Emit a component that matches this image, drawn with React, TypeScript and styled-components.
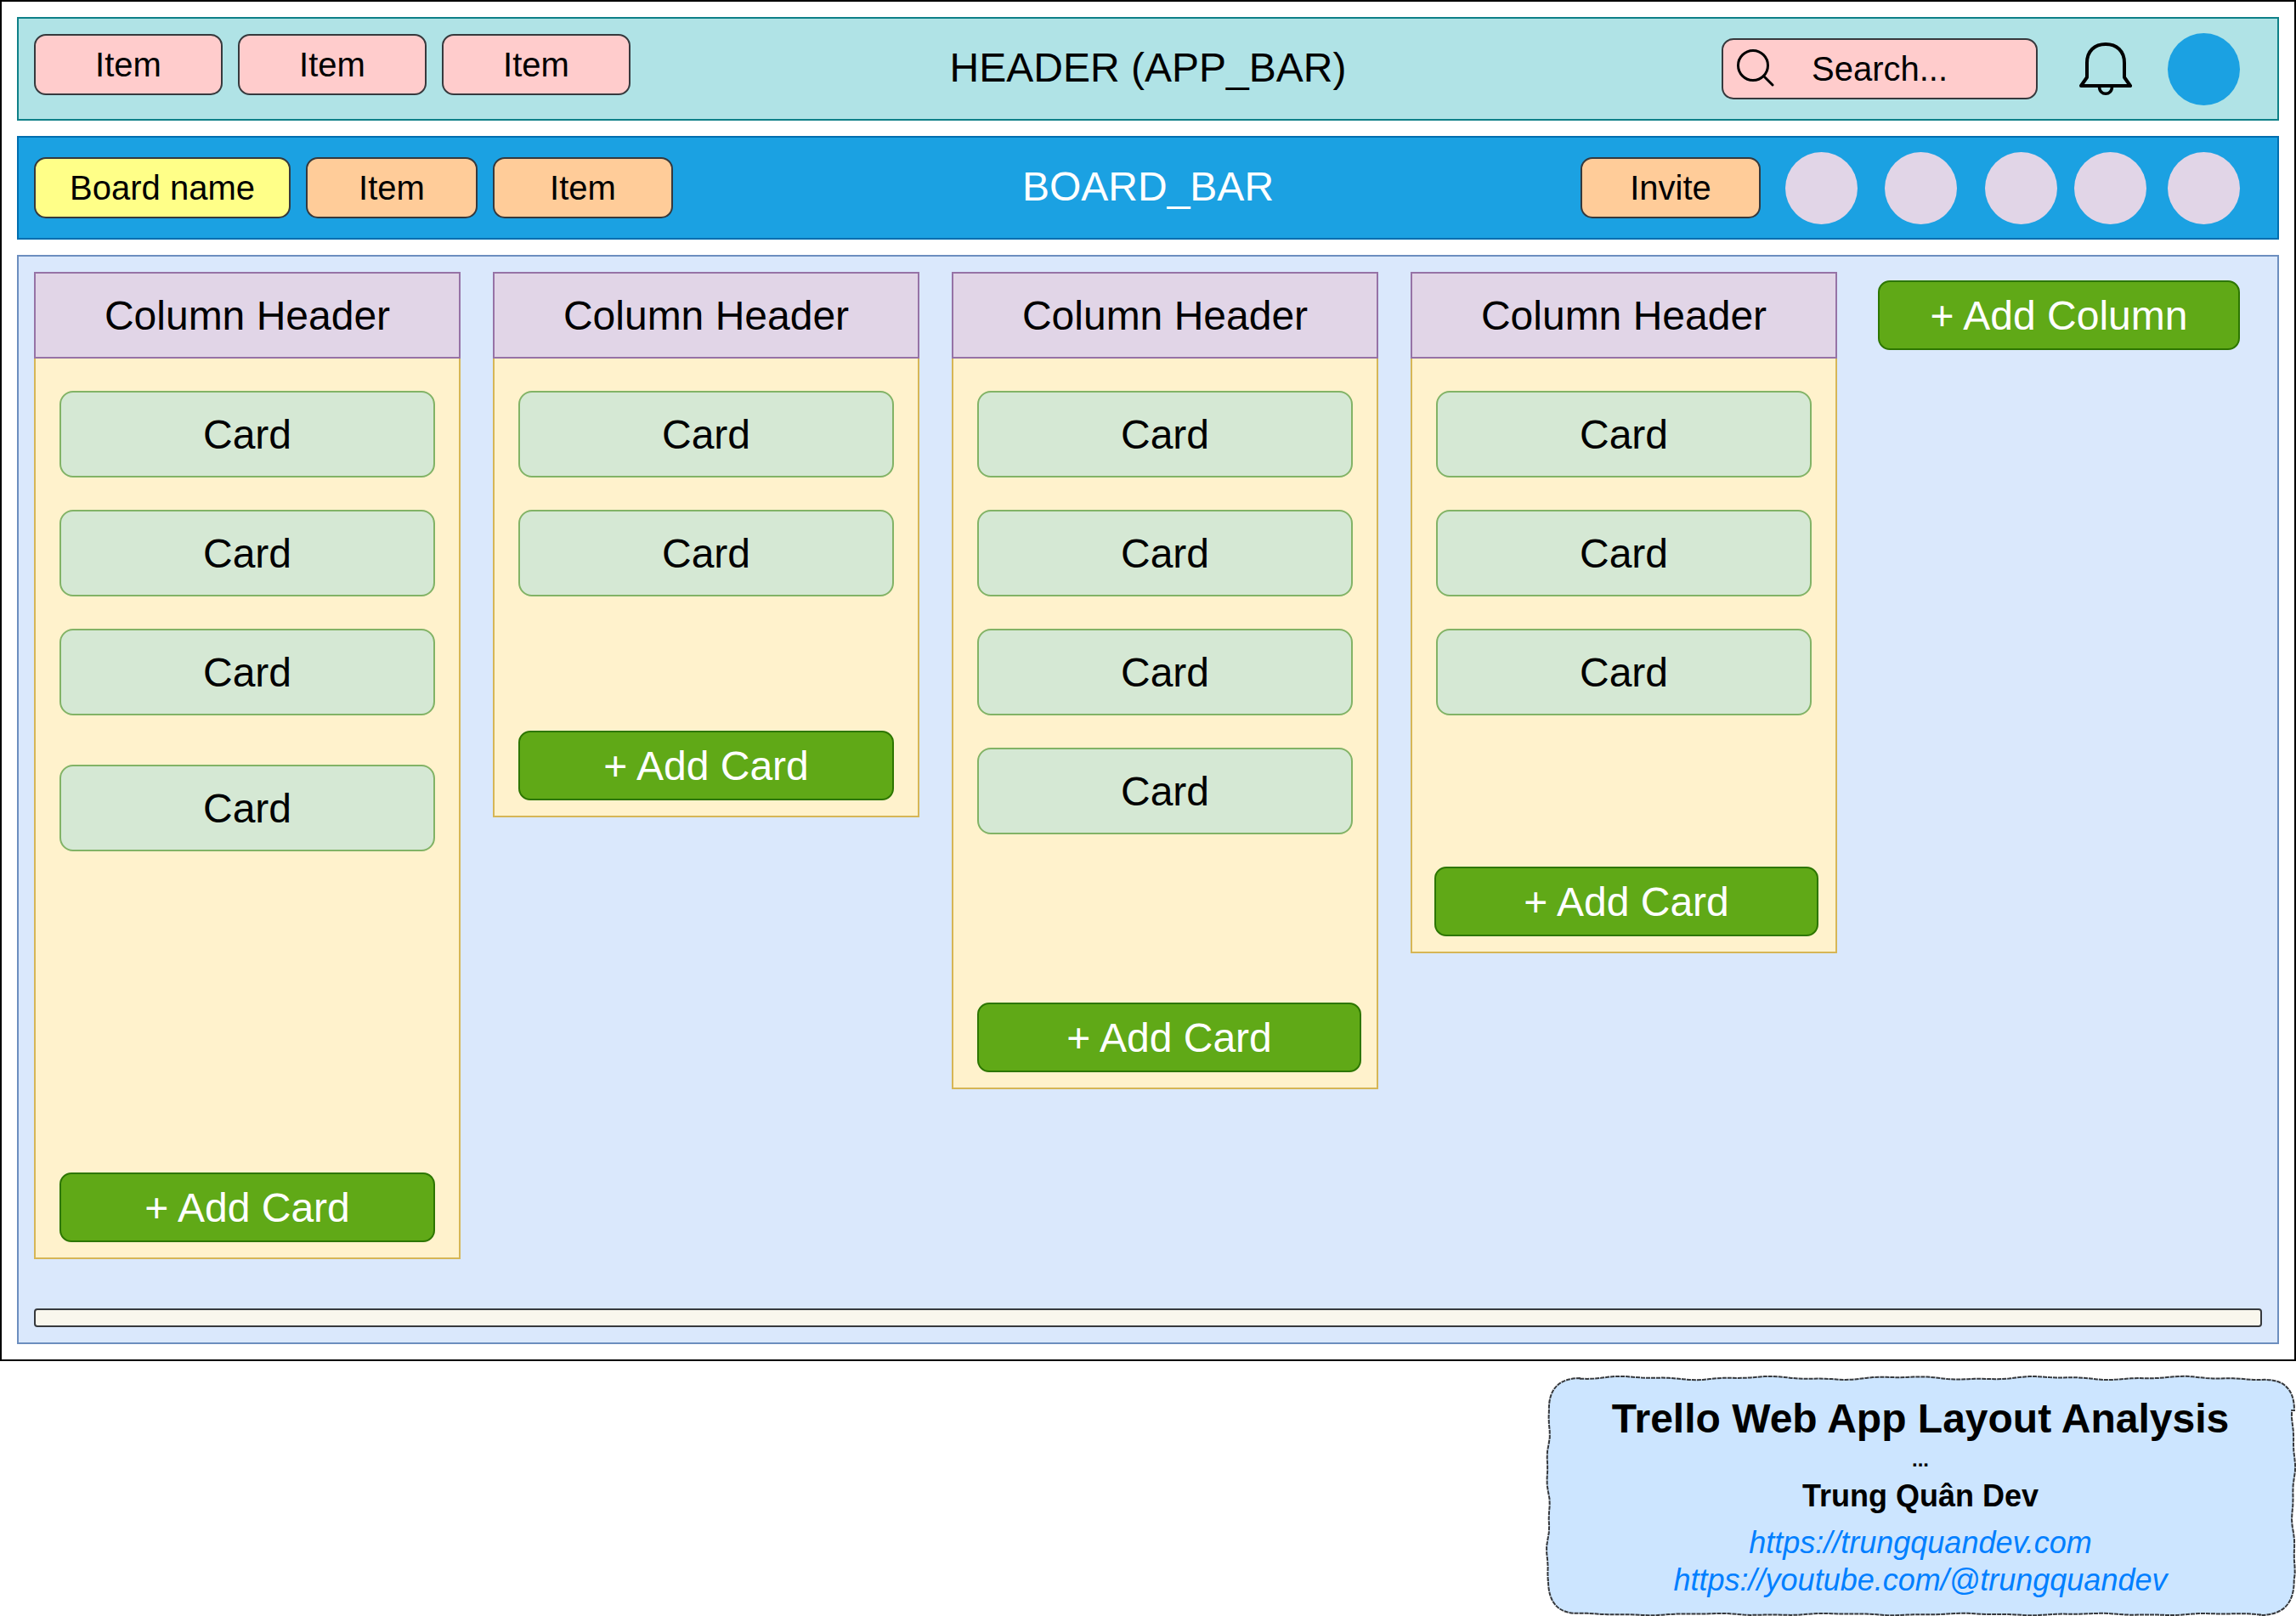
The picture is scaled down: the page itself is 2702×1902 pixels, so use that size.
import React from 'react'
import styled, { createGlobalStyle } from 'styled-components'

const GlobalStyle = createGlobalStyle`
  html, body {
    margin: 0;
    padding: 0;
    background: #ffffff;
  }
  * {
    box-sizing: border-box;
  }
  body {
    font-family: "Liberation Sans", Arial, sans-serif;
    color: #000000;
  }
`

const Page = styled.div`
  width: 2702px;
  height: 1902px;
  display: flex;
  flex-direction: column;
`

const Frame = styled.div`
  height: 1602px;
  border: 2px solid #000000;
  padding: 18px;
  display: flex;
  flex-direction: column;
  gap: 18px;
`

const Bar = styled.div<{ $fill: string; $line: string }>`
  height: 122px;
  flex: none;
  padding: 0 18px;
  display: grid;
  grid-template-columns: 1fr auto 1fr;
  align-items: center;
  background: ${(p) => p.$fill};
  border: 2px solid ${(p) => p.$line};
`

const Group = styled.div<{ $lift?: number }>`
  display: flex;
  align-items: center;
  gap: 18px;
  margin-bottom: ${(p) => p.$lift ?? 0}px;
`

const RightGroup = styled.div`
  display: flex;
  align-items: center;
  justify-content: flex-end;
  margin-right: 26px;
`

const BarTitle = styled.div<{ $light?: boolean }>`
  font-size: 48px;
  line-height: 56px;
  margin-bottom: 2px;
  color: ${(p) => (p.$light ? '#ffffff' : '#000000')};
`

const Chip = styled.div<{ $fill: string; $width: number }>`
  width: ${(p) => p.$width}px;
  height: 72px;
  flex: none;
  display: flex;
  align-items: center;
  justify-content: center;
  font-size: 40px;
  background: ${(p) => p.$fill};
  border: 2px solid #36393d;
  border-radius: 14px;
`

const SearchBox = styled.div`
  width: 372px;
  height: 72px;
  padding-left: 16px;
  display: flex;
  align-items: center;
  font-size: 40px;
  background: #ffcccc;
  border: 2px solid #36393d;
  border-radius: 14px;
`

const SearchGlyph = styled.svg`
  display: block;
  margin-bottom: 3px;
`

const SearchText = styled.span`
  margin: 1px 0 0 44px;
`

const BellWrap = styled.div`
  width: 62px;
  height: 62px;
  margin: 0 42px 0 49px;
  display: flex;
`

const Avatar = styled.div<{ $fill: string; $left?: number }>`
  width: 85px;
  height: 85px;
  flex: none;
  border-radius: 50%;
  margin-left: ${(p) => p.$left ?? 0}px;
  background: ${(p) => p.$fill};
`

const Main = styled.div`
  flex: 1;
  padding: 18px;
  display: flex;
  flex-direction: column;
  justify-content: space-between;
  background: #dae8fc;
  border: 2px solid #6c8ebf;
`

const Columns = styled.div`
  display: flex;
  align-items: flex-start;
  gap: 38px;
`

const Column = styled.div`
  width: 502px;
  flex: none;
`

const ColumnHeader = styled.div`
  height: 102px;
  display: flex;
  align-items: center;
  justify-content: center;
  font-size: 48px;
  background: #e1d5e7;
  border: 2px solid #9673a6;
`

const ColumnBody = styled.div<{ $height: number }>`
  height: ${(p) => p.$height}px;
  padding: 38px 18px 18px 28px;
  display: flex;
  flex-direction: column;
  background: #fff2cc;
  border: 2px solid #d6b656;
  border-top: none;
`

const Card = styled.div<{ $gap?: number }>`
  width: 442px;
  height: 102px;
  flex: none;
  margin-top: ${(p) => p.$gap ?? 0}px;
  display: flex;
  align-items: center;
  justify-content: center;
  font-size: 48px;
  background: #d5e8d4;
  border: 2px solid #82b366;
  border-radius: 16px;
`

const GreenButton = styled.div<{ $width: number }>`
  width: ${(p) => p.$width}px;
  height: 82px;
  flex: none;
  display: flex;
  align-items: center;
  justify-content: center;
  font-size: 48px;
  color: #ffffff;
  background: #60a917;
  border: 2px solid #2d7600;
  border-radius: 14px;
`

const AddCard = styled(GreenButton)<{ $nudge?: number }>`
  margin-top: auto;
  margin-left: ${(p) => p.$nudge ?? 0}px;
`

const AddColumn = styled(GreenButton)`
  margin: 10px 0 0 10px;
`

const ScrollBar = styled.div`
  height: 22px;
  flex: none;
  background: #f9f7ed;
  border: 2px solid #36393d;
  border-radius: 4px;
`

const Note = styled.div`
  position: relative;
  width: 884px;
  height: 284px;
  margin: 16px 0 0 auto;
  padding-top: 24px;
  display: flex;
  flex-direction: column;
  align-items: center;
`

const NoteOutline = styled.svg`
  position: absolute;
  inset: 0;
  width: 100%;
  height: 100%;
`

const NoteTitle = styled.div`
  position: relative;
  font-size: 48px;
  line-height: 56px;
  font-weight: 700;
`

const NoteDots = styled.div`
  position: relative;
  font-size: 24px;
  line-height: 28px;
  font-weight: 700;
  margin-top: 6px;
`

const NoteAuthor = styled.div`
  position: relative;
  font-size: 36px;
  line-height: 42px;
  font-weight: 700;
  margin-top: 8px;
`

const NoteLinks = styled.div`
  position: relative;
  margin-top: 12px;
  font-size: 36px;
  line-height: 44px;
  font-style: italic;
  color: #007fff;
  text-align: center;
`

// hand-drawn outline of the note, small waves along each side
const wobble = (t: number, period: number, seed: number) =>
  1.5 * Math.sin(t / period + seed) + 0.7 * Math.sin(t / (period * 0.37) + seed * 2)

const notePath = (w: number, h: number, r: number) => {
  const pts: string[] = [`M${r} 4`]
  for (let x = r; x <= w - r; x += 8) pts.push(`L${x} ${(4 + wobble(x, 26, 1)).toFixed(1)}`)
  pts.push(`Q${w - 2} 3 ${w - 2} ${r}`)
  for (let y = r; y <= h - r; y += 8) pts.push(`L${(w - 3 + wobble(y, 18, 2)).toFixed(1)} ${y}`)
  pts.push(`Q${w - 2} ${h - 1} ${w - r} ${h - 1}`)
  for (let x = w - r; x >= r; x -= 8) pts.push(`L${x} ${(h - 2 + wobble(x, 24, 3) * 0.6).toFixed(1)}`)
  pts.push(`Q4 ${h - 1} 4 ${h - r}`)
  for (let y = h - r; y >= r; y -= 8) pts.push(`L${(4 + wobble(y, 16, 4)).toFixed(1)} ${y}`)
  pts.push(`Q4 4 ${r} 4Z`)
  return pts.join(' ')
}

const SearchIcon = () => (
  <SearchGlyph width="44" height="44" viewBox="0 0 44 44" fill="none" stroke="#000000" strokeWidth="3" strokeLinecap="round">
    <circle cx="19" cy="19" r="17.5" />
    <path d="M31.5 31.5L42 42" />
  </SearchGlyph>
)

const BellIcon = () => (
  <svg width="62" height="62" viewBox="0 0 62 62" fill="none" stroke="#000000" strokeLinejoin="round" strokeLinecap="round">
    <path strokeWidth="4" d="M9 41V24C9 10 18 2 31 2C44 2 53 10 53 24V41L60 51H2Z" />
    <path strokeWidth="3.5" d="M23.5 52C23.5 63 38.5 63 38.5 52" />
  </svg>
)

const App: React.FC = () => {
  return (
    <Page>
      <GlobalStyle />
      <Frame>
        <Bar $fill="#b0e3e6" $line="#0e8088">
          <Group $lift={10}>
            <Chip $fill="#ffcccc" $width={222}>Item</Chip>
            <Chip $fill="#ffcccc" $width={222}>Item</Chip>
            <Chip $fill="#ffcccc" $width={222}>Item</Chip>
          </Group>
          <BarTitle>HEADER (APP_BAR)</BarTitle>
          <RightGroup>
            <SearchBox>
              <SearchIcon />
              <SearchText>Search...</SearchText>
            </SearchBox>
            <BellWrap>
              <BellIcon />
            </BellWrap>
            <Avatar $fill="#1ba1e2" />
          </RightGroup>
        </Bar>

        <Bar $fill="#1ba1e2" $line="#006eaf">
          <Group>
            <Chip $fill="#ffff88" $width={302}>Board name</Chip>
            <Chip $fill="#ffcc99" $width={202}>Item</Chip>
            <Chip $fill="#ffcc99" $width={212}>Item</Chip>
          </Group>
          <BarTitle $light>BOARD_BAR</BarTitle>
          <RightGroup>
            <Chip $fill="#ffcc99" $width={212}>Invite</Chip>
            <Avatar $fill="#e1d5e7" $left={29} />
            <Avatar $fill="#e1d5e7" $left={32} />
            <Avatar $fill="#e1d5e7" $left={33} />
            <Avatar $fill="#e1d5e7" $left={20} />
            <Avatar $fill="#e1d5e7" $left={25} />
          </RightGroup>
        </Bar>

        <Main>
          <Columns>
            <Column>
              <ColumnHeader>Column Header</ColumnHeader>
              <ColumnBody $height={1060}>
                <Card>Card</Card>
                <Card $gap={38}>Card</Card>
                <Card $gap={38}>Card</Card>
                <Card $gap={58}>Card</Card>
                <AddCard $width={442}>+ Add Card</AddCard>
              </ColumnBody>
            </Column>
            <Column>
              <ColumnHeader>Column Header</ColumnHeader>
              <ColumnBody $height={540}>
                <Card>Card</Card>
                <Card $gap={38}>Card</Card>
                <AddCard $width={442}>+ Add Card</AddCard>
              </ColumnBody>
            </Column>
            <Column>
              <ColumnHeader>Column Header</ColumnHeader>
              <ColumnBody $height={860}>
                <Card>Card</Card>
                <Card $gap={38}>Card</Card>
                <Card $gap={38}>Card</Card>
                <Card $gap={38}>Card</Card>
                <AddCard $width={452}>+ Add Card</AddCard>
              </ColumnBody>
            </Column>
            <Column>
              <ColumnHeader>Column Header</ColumnHeader>
              <ColumnBody $height={700}>
                <Card>Card</Card>
                <Card $gap={38}>Card</Card>
                <Card $gap={38}>Card</Card>
                <AddCard $width={452} $nudge={-2}>+ Add Card</AddCard>
              </ColumnBody>
            </Column>
            <AddColumn $width={426}>+ Add Column</AddColumn>
          </Columns>
          <ScrollBar />
        </Main>
      </Frame>

      <Note>
        <NoteOutline viewBox="0 0 884 284">
          <path d={notePath(884, 284, 42)} fill="#cce5ff" stroke="#36393d" strokeWidth="2" strokeDasharray="5 1" />
        </NoteOutline>
        <NoteTitle>Trello Web App Layout Analysis</NoteTitle>
        <NoteDots>...</NoteDots>
        <NoteAuthor>Trung Quân Dev</NoteAuthor>
        <NoteLinks>
          https://trungquandev.com
          <br />
          https://youtube.com/@trungquandev
        </NoteLinks>
      </Note>
    </Page>
  )
}

export default App
